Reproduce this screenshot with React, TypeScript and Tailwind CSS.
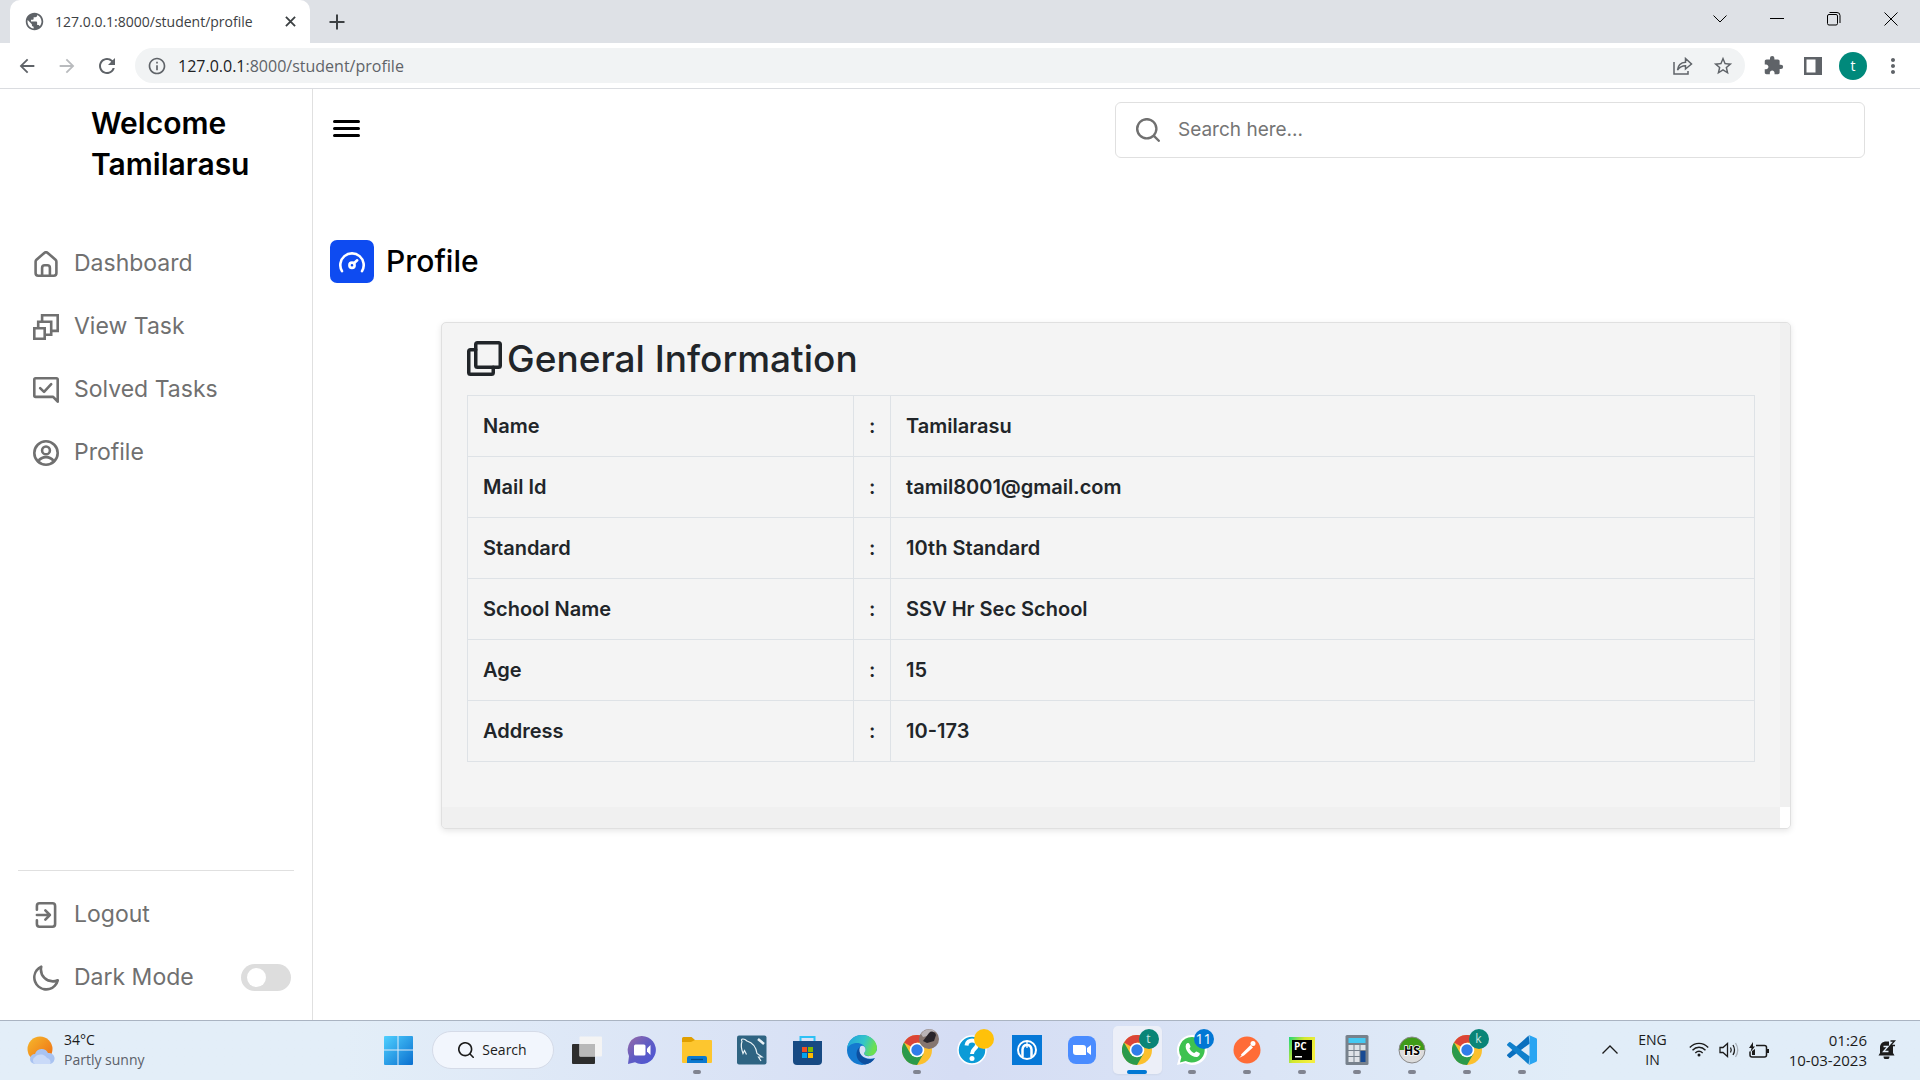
import React from "react";
import {
  MdArrowBack,
  MdArrowForward,
  MdExtension,
  MdInfoOutline,
  MdMoreVert,
  MdPublic,
  MdRefresh,
  MdStarBorder,
} from "react-icons/md";

type Kids = { children?: React.ReactNode };

/* ---------- line icons ---------- */

function Line({ children, className = "size-[26px]" }: Kids & { className?: string }) {
  return (
    <svg
      viewBox="2 2 20 20"
      className={`${className} shrink-0`}
      fill="none"
      stroke="currentColor"
      strokeWidth="2"
      strokeLinecap="round"
      strokeLinejoin="round"
      aria-hidden="true"
    >
      {children}
    </svg>
  );
}

const HomeIcon = () => (
  <Line>
    <path
      stroke="none"
      fill="currentColor"
      d="M20,8h0L14,2.74a3,3,0,0,0-4,0L4,8a3,3,0,0,0-1,2.26V19a3,3,0,0,0,3,3H18a3,3,0,0,0,3-3V10.25A3,3,0,0,0,20,8ZM14,20H10V15a1,1,0,0,1,1-1h2a1,1,0,0,1,1,1Zm5-1a1,1,0,0,1-1,1H16V15a3,3,0,0,0-3-3H11a3,3,0,0,0-3,3v5H6a1,1,0,0,1-1-1V10.25a1,1,0,0,1,.34-.75l6-5.25a1,1,0,0,1,1.32,0l6,5.25a1,1,0,0,1,.34.75Z"
    />
  </Line>
);
const LayersIcon = () => (
  <Line>
    <path strokeLinejoin="miter" d="M3 13H11V21H3Z M6 12.5V8H16V18H11.5 M9 7.5V3H21V15H16.5" />
  </Line>
);
const SolvedIcon = () => (
  <Line>
    <path d="M4 3H20a1 1 0 0 1 1 1V21L17.5 17.3H4a1 1 0 0 1-1-1V4a1 1 0 0 1 1-1Z" />
    <path d="M7.5 10.5l3 3 5.5-6" />
  </Line>
);
const UserIcon = () => (
  <Line>
    <circle cx="12" cy="12" r="9" />
    <circle cx="12" cy="10" r="3" />
    <path d="M6 18.3a7.3 7.3 0 0 1 12 0" />
  </Line>
);
const LogoutIcon = () => (
  <Line>
    <path d="M5 8V5a2 2 0 0 1 2-2h10a2 2 0 0 1 2 2v14a2 2 0 0 1-2 2H7a2 2 0 0 1-2-2v-3 M5 12H15 M11.5 8.5L15 12 11.5 15.5" />
  </Line>
);
const MoonIcon = () => (
  <Line>
    <path
      stroke="none"
      fill="currentColor"
      d="M21.64,13a1,1,0,0,0-1.05-.14,8.05,8.05,0,0,1-3.37.73A8.15,8.15,0,0,1,9.08,5.49a8.59,8.59,0,0,1,.25-2A1,1,0,0,0,8,2.36,10.14,10.14,0,1,0,22,14.05,1,1,0,0,0,21.64,13Zm-9.5,6.69A8.14,8.14,0,0,1,7.08,5.22v.27A10.15,10.15,0,0,0,17.22,15.63a9.79,9.79,0,0,0,2.1-.22A8.11,8.11,0,0,1,12.14,19.73Z"
    />
  </Line>
);
const SearchIcon = ({ className }: { className?: string }) => (
  <Line className={className}>
    <path
      stroke="none"
      fill="currentColor"
      d="M21.71,20.29,18,16.61A9,9,0,1,0,16.61,18l3.68,3.68a1,1,0,0,0,1.42,0A1,1,0,0,0,21.71,20.29ZM11,18a7,7,0,1,1,7-7A7,7,0,0,1,11,18Z"
    />
  </Line>
);
const GaugeIcon = () => (
  <Line>
    <path d="M4.3 19A9 9 0 1 1 19.7 19" />
    <circle cx="12" cy="14.5" r="2" />
    <path d="M13.5 13L16 10.7" />
  </Line>
);
const CopiesIcon = () => (
  <Line className="size-[35px]">
    <rect x="7" y="3" width="14" height="14" rx="1" />
    <path d="M7 7H4a1 1 0 0 0-1 1v12a1 1 0 0 0 1 1h12a1 1 0 0 0 1-1v-3" />
  </Line>
);

/* ---------- browser chrome ---------- */

function IconButton({ label, children, className = "w-10" }: Kids & { label: string; className?: string }) {
  return (
    <button type="button" aria-label={label} className={`flex h-full shrink-0 items-center justify-center ${className}`}>
      {children}
    </button>
  );
}

function TabStrip() {
  return (
    <div className="flex h-[43px] items-stretch bg-[#dee1e6] pl-[10px] text-[#3c4043]">
      <div className="flex w-[300px] items-center rounded-t-[10px] bg-white pr-[10px] pb-px pl-[14px]">
        <MdPublic className="size-[21px] shrink-0 text-[#5f6368]" />
        <span className="ml-[10px] flex-1 text-[14px] whitespace-nowrap">127.0.0.1:8000/student/profile</span>
        <IconButton label="Close tab" className="w-5">
          <svg viewBox="0 0 12 12" className="size-[11px]" stroke="currentColor" strokeWidth="2">
            <path d="M1 1L11 11M11 1L1 11" />
          </svg>
        </IconButton>
      </div>
      <IconButton label="New tab" className="w-[54px]">
        <svg viewBox="0 0 16 16" className="size-4" stroke="currentColor" strokeWidth="2">
          <path d="M8 0.5V15.5M0.5 8H15.5" />
        </svg>
      </IconButton>
      <div className="ml-auto flex h-[38px] text-black">
        <IconButton label="Search tabs" className="w-14">
          <svg viewBox="0 0 14 8" className="h-2 w-[14px]" fill="none" stroke="currentColor">
            <path d="M0.5 0.5L7 7L13.5 0.5" />
          </svg>
        </IconButton>
        <IconButton label="Minimise" className="w-[57px]">
          <svg viewBox="0 0 14 2" className="h-[2px] w-[14px]">
            <path d="M0 0.5H14" stroke="currentColor" />
          </svg>
        </IconButton>
        <IconButton label="Restore" className="w-[57px]">
          <svg viewBox="0 0 14 14" className="size-[14px]" fill="none" stroke="currentColor">
            <rect x="0.5" y="2.5" width="10" height="10.5" rx="1.5" />
            <path d="M2.5 0.5H10A3 3 0 0 1 13 3.5V11" />
          </svg>
        </IconButton>
        <IconButton label="Close" className="w-[58px]">
          <svg viewBox="0 0 14 14" className="size-[14px]" stroke="currentColor">
            <path d="M0.5 0.5L13.5 13.5M13.5 0.5L0.5 13.5" />
          </svg>
        </IconButton>
      </div>
    </div>
  );
}

function Toolbar() {
  return (
    <div className="flex h-[46px] items-center border-b border-[#dadce0] bg-white pr-[7px] pl-[7px] text-[#5f6368]">
      <IconButton label="Back">
        <MdArrowBack className="size-[22px]" />
      </IconButton>
      <IconButton label="Forward">
        <MdArrowForward className="size-[22px] text-[#b9bbbe]" />
      </IconButton>
      <IconButton label="Reload">
        <MdRefresh className="size-6" />
      </IconButton>
      <div className="ml-2 flex h-[35px] flex-1 items-center rounded-full bg-[#f1f3f4] pr-[2px] pl-3">
        <MdInfoOutline className="size-5 shrink-0" />
        <label htmlFor="address" className="ml-[11px] text-[16px] text-[#202124]">
          127.0.0.1
        </label>
        <input
          id="address"
          defaultValue=":8000/student/profile"
          className="min-w-0 flex-1 bg-transparent text-[16px] text-[#5f6368] outline-none"
        />
        <IconButton label="Share">
          <svg viewBox="0 0 20 18" className="h-[18px] w-5" fill="none" stroke="currentColor" strokeWidth="1.5">
            <path d="M1 5V17H15V14" />
            <path d="M4.5 13C5 8 8 5.5 12.5 5.2V1.5L18.5 7L12.5 12V8.7C9 8.7 6.5 10 4.5 13Z" />
          </svg>
        </IconButton>
        <IconButton label="Bookmark">
          <MdStarBorder className="size-[22px]" />
        </IconButton>
      </div>
      <div className="ml-2 flex h-full">
        <IconButton label="Extensions">
          <MdExtension className="size-[21px]" />
        </IconButton>
        <IconButton label="Side panel">
          <svg viewBox="0 0 18 18" className="size-[18px]">
            <path fill="currentColor" fillRule="evenodd" d="M0 0H18V18H0Z M2.5 2.5V15.5H11.5V2.5Z" />
          </svg>
        </IconButton>
        <IconButton label="Account">
          <span className="flex size-7 items-center justify-center rounded-full bg-[#00897b] text-[14px] text-white">t</span>
        </IconButton>
        <IconButton label="Menu">
          <MdMoreVert className="size-6" />
        </IconButton>
      </div>
    </div>
  );
}

/* ---------- page ---------- */

function NavLink({ icon, children }: Kids & { icon: React.ReactNode }) {
  return (
    <a href="#" className="flex h-[63px] items-center gap-[15px] pl-[15px] text-[23px]">
      {icon}
      {children}
    </a>
  );
}

function Sidebar() {
  return (
    <nav className="flex w-[313px] shrink-0 flex-col border-r border-[#e0e0e0] px-[18px] pt-[14px] pb-[11px] text-[#707070]">
      <h1 className="pl-[73px] text-[30px] leading-[41px] font-semibold text-black">
        Welcome
        <br />
        Tamilarasu
      </h1>
      <div className="mt-[47px] flex flex-1 flex-col">
        <NavLink icon={<HomeIcon />}>Dashboard</NavLink>
        <NavLink icon={<LayersIcon />}>View Task</NavLink>
        <NavLink icon={<SolvedIcon />}>Solved Tasks</NavLink>
        <NavLink icon={<UserIcon />}>Profile</NavLink>
      </div>
      <div className="border-t border-[#e0e0e0] pt-3">
        <NavLink icon={<LogoutIcon />}>Logout</NavLink>
        <div className="flex h-[63px] items-center gap-[15px] pr-[3px] pl-[15px] text-[23px]">
          <MoonIcon />
          <label htmlFor="dark">Dark Mode</label>
          <input
            id="dark"
            type="checkbox"
            role="switch"
            className="ml-auto h-[27px] w-[50px] appearance-none rounded-full bg-[#ddd] p-1 pl-[6px] before:block before:size-[19px] before:rounded-full before:bg-white checked:bg-[#0e4bf1]"
          />
        </div>
      </div>
    </nav>
  );
}

const rows = [
  ["Name", "Tamilarasu"],
  ["Mail Id", "tamil8001@gmail.com"],
  ["Standard", "10th Standard"],
  ["School Name", "SSV Hr Sec School"],
  ["Age", "15"],
  ["Address", "10-173"],
];

function InfoCard() {
  return (
    <section className="mt-[39px] mr-[129px] ml-[111px] grid grid-cols-[1fr_10px] overflow-hidden rounded-[5px] border border-[#e0e0e0] bg-[#f4f4f4] text-[#212529] shadow-[0_2px_6px_rgba(0,0,0,0.1)]">
      <div className="px-[25px] pt-3 pb-[45px]">
        <h3 className="flex h-[47px] items-center gap-[5px] text-[37px] font-medium">
          <CopiesIcon />
          General Information
        </h3>
        <table className="mt-[13px] w-full table-fixed border-collapse text-left text-[20px] leading-[30px]">
          <colgroup>
            <col className="w-[30%]" />
            <col className="w-[37px]" />
            <col />
          </colgroup>
          <tbody>
            {rows.map(([name, value]) => (
              <tr key={name}>
                <th scope="row" className="border border-[#dee2e6] px-[15px] py-[15px] font-semibold">
                  {name}
                </th>
                <td className="border border-[#dee2e6] text-center font-semibold">:</td>
                <td className="border border-[#dee2e6] px-[15px] font-semibold">{value}</td>
              </tr>
            ))}
          </tbody>
        </table>
      </div>
      <div className="bg-[#f0f0f0]" />
      <div className="h-[21px] bg-[#f0f0f0]" />
      <div className="bg-white" />
    </section>
  );
}

function Main() {
  return (
    <main className="flex-1 pl-[17px]">
      <header className="flex items-center justify-between pt-[13px] pr-[55px] pl-[3px]">
        <button type="button" aria-label="Toggle sidebar" className="mb-1">
          <svg viewBox="0 0 27 17" className="h-[17px] w-[27px]" stroke="#000" strokeWidth="3" strokeLinecap="round">
            <path d="M1.5 1.5H25.5M1.5 8.5H25.5M1.5 15.5H25.5" />
          </svg>
        </button>
        <label className="flex h-14 w-[750px] items-center gap-[18px] rounded-[6px] border border-[#e0e0e0] pl-5 text-[#707070]">
          <SearchIcon className="size-6" />
          <input
            type="text"
            aria-label="Search"
            placeholder="Search here..."
            className="min-w-0 flex-1 text-[19px] outline-none placeholder:text-[#757575]"
          />
        </label>
      </header>
      <div className="mt-[82px] flex items-center gap-3">
        <span className="flex h-[43px] w-11 items-center justify-center rounded-[7px] bg-[#0e4bf1] text-white">
          <GaugeIcon />
        </span>
        <h2 className="text-[30px] leading-[43px] font-medium text-black">Profile</h2>
      </div>
      <InfoCard />
    </main>
  );
}

/* ---------- taskbar icons ---------- */

function Art({ children, box = "0 0 30 30" }: Kids & { box?: string }) {
  return (
    <svg viewBox={box} className="size-[30px]" aria-hidden="true">
      {children}
    </svg>
  );
}

const WindowsArt = () => (
  <Art>
    <defs>
      <linearGradient id="win" x1="0" y1="0" x2="1" y2="1" gradientUnits="objectBoundingBox">
        <stop offset="0" stopColor="#4fd0ff" />
        <stop offset="1" stopColor="#0a6fcf" />
      </linearGradient>
    </defs>
    <path fill="url(#win)" d="M1 2a1 1 0 0 1 1-1H14.5V14.5H1Z M15.5 1H29a1 1 0 0 1 1 1V14.5H15.5Z M1 15.5H14.5V30H2a1 1 0 0 1-1-1Z M15.5 15.5H30V29a1 1 0 0 1-1 1H15.5Z" />
  </Art>
);
const TaskViewArt = () => (
  <Art>
    <rect x="0" y="9" width="23" height="20" rx="1" fill="#2d2d2d" />
    <rect x="7.5" y="1.5" width="22.5" height="20" rx="1" fill="#f4f4f4" />
    <rect x="7.5" y="9" width="15.5" height="12.5" fill="#b9b9b9" />
  </Art>
);
const ChatArt = () => (
  <Art>
    <defs>
      <linearGradient id="chat" x1="0" y1="0" x2="1" y2="1">
        <stop offset="0" stopColor="#9a6aa6" />
        <stop offset="0.5" stopColor="#5f5cc4" />
        <stop offset="1" stopColor="#4b55d6" />
      </linearGradient>
    </defs>
    <path fill="url(#chat)" d="M15 1A14 14 0 1 1 8 27.2L1 29 2 21A14 14 0 0 1 15 1Z" />
    <rect x="7" y="9.5" width="11.5" height="11" rx="1.5" fill="#fff" />
    <path fill="#fff" d="M20 13.5L23.5 10V20L20 16.5Z" />
  </Art>
);
const ExplorerArt = () => (
  <Art>
    <path fill="#e09f00" d="M0 3.5a1.5 1.5 0 0 1 1.5-1.5H9.5L13 5H29V12H0Z" />
    <path fill="#fdc62f" d="M0 7H9L13 5H29a1 1 0 0 1 1 1V27a1 1 0 0 1-1 1H1a1 1 0 0 1-1-1Z" />
    <path fill="#0b79d0" d="M5 28V23a2 2 0 0 1 2-2H23a2 2 0 0 1 2 2V28Z" />
    <path stroke="#054b86" strokeWidth="1.3" d="M9 24.5H21" />
  </Art>
);
const MysqlArt = () => (
  <Art>
    <rect x="0" y="0.5" width="29.5" height="29" rx="2" fill="#2f6482" />
    <path fill="none" stroke="#e8f1f5" strokeWidth="1.2" d="M9.5 19.5L7.5 15.5 6 18.5C4 13 4 9 5 6.5 3 3.5 7 3 10 6 15 7.5 19 11.5 20 18.5L25 22 21.5 22 24 26" />
    <path stroke="#e8f1f5" strokeWidth="2.5" d="M21 4L27 9" />
  </Art>
);
const StoreArt = () => (
  <Art>
    <path fill="none" stroke="#2ec1f5" strokeWidth="2" d="M8.5 7V2H22.5V7" />
    <path fill="#174a83" d="M1 6H30V26a4 4 0 0 1-4 4H5a4 4 0 0 1-4-4Z" />
    <path fill="#f25022" d="M10 12h5v5h-5z" />
    <path fill="#7fba00" d="M16 12h5v5h-5z" />
    <path fill="#00a4ef" d="M10 18h5v5h-5z" />
    <path fill="#ffb900" d="M16 18h5v5h-5z" />
  </Art>
);
const EdgeArt = () => (
  <Art>
    <defs>
      <linearGradient id="edge" x1="0" y1="0" x2="1" y2="0.3">
        <stop offset="0" stopColor="#1f9fe0" />
        <stop offset="0.6" stopColor="#33c5c9" />
        <stop offset="1" stopColor="#6be04f" />
      </linearGradient>
    </defs>
    <circle cx="15" cy="15" r="15" fill="#1479cf" />
    <path fill="url(#edge)" d="M0 14C1 5 7 0 15 0 24 0 30 6.5 30 13 30 18 27 21 22.5 21 19 21 17 19.5 17 18.5 17 17.5 18.5 17 18.5 14.5 18.5 10 13 7.5 9 8 4.5 8.5 1 11 0 14Z" />
    <path fill="#0d4f9f" d="M13 12C8 15 7.5 26 18 29.5 22 29 26 26.5 28 23 19 27 11.5 21 13 12Z" />
    <path fill="#d6e0f6" d="M13 12C15 9.5 18.5 11.5 18.5 14.5 18.5 17 17 17.5 17 18.5 17 20.5 20 21.5 23 21 26 21 29 18 30 15V24L28 23C19 26 10 20 13 12Z" />
  </Art>
);
const ChromeArt = () => (
  <Art>
    <circle cx="15" cy="15" r="15" fill="#fbc02d" />
    <path fill="#db4437" d="M15 15L2 7.5A15 15 0 0 1 28 7.5H15Z" />
    <path fill="#2b9a4b" d="M15 15L8.5 18.7 2 7.5A15 15 0 0 0 15 30L21.5 18.7Z" />
    <circle cx="15" cy="15" r="7.3" fill="#fff" />
    <circle cx="15" cy="15" r="5.7" fill="#2f7de9" />
  </Art>
);
const HelpArt = () => (
  <Art>
    <circle cx="15" cy="15" r="14" fill="#0b9bd7" stroke="#fff" strokeWidth="1.5" />
    <path fill="none" stroke="#fff" strokeWidth="4" d="M9.5 10.5C10 3.5 20.5 4 20 10 19.5 14 15 14 15 19" />
    <circle cx="15" cy="23.5" r="2.5" fill="#fff" />
  </Art>
);
const BlueArt = () => (
  <Art>
    <path fill="#0678d7" d="M0 0H30V30H0Z" />
    <circle cx="15" cy="15" r="9" fill="none" stroke="#fff" strokeWidth="2" />
    <path fill="none" stroke="#fff" strokeWidth="2.5" d="M10.5 22V14.5C11 8.5 19 8.500 19.5 14.5V22" />
    <path stroke="#fff" strokeWidth="1.3" d="M15 7V13" />
  </Art>
);
const ZoomArt = () => (
  <Art>
    <rect x="1" y="1" width="28" height="28" rx="8" fill="#4a8cff" />
    <path fill="#fff" d="M6 10H16a3 3 0 0 1 3 3V20H9a3 3 0 0 1-3-3Z M20 13L24 10V20L20 17Z" />
  </Art>
);
const WhatsappArt = () => (
  <Art>
    <path fill="#fff" d="M15 0A15 15 0 1 1 8 28L0 30 2 22.5A15 15 0 0 1 15 0Z" />
    <path fill="#3ec250" d="M15.2 2A12.8 12.8 0 1 1 8.7 26L3 27.5 4.4 22A12.8 12.8 0 0 1 15.2 2Z" />
    <path fill="#fff" d="M9 9.5C10 7.5 12 7.5 12.5 9L13.5 11.5C13.5 12.5 12.5 13 12.5 13.5 13.5 15.5 15 17 17 18 18 18 18.5 16.5 19.5 16.5L22.5 18C23.5 19 22 21.5 20 22 14 22.5 7 15 9 9.5Z" />
  </Art>
);
const PostmanArt = () => (
  <Art>
    <circle cx="15" cy="15" r="13.5" fill="#ff6c37" />
    <circle cx="21" cy="8.5" r="2.5" fill="#fff" />
    <path fill="#fff" d="M18.5 10L21 12.5 12 20.5 7 23 9.5 20.5 9 19.5Z" />
  </Art>
);
const PycharmArt = () => (
  <Art>
    <defs>
      <linearGradient id="py" x1="0" y1="0" x2="1" y2="0.5">
        <stop offset="0" stopColor="#1fd67a" />
        <stop offset="0.5" stopColor="#d5e82f" />
        <stop offset="1" stopColor="#f3ee3f" />
      </linearGradient>
    </defs>
    <path fill="url(#py)" d="M2 2H28V28H2Z" />
    <path fill="#000" d="M5 5H25V25H5Z" />
    <text x="7" y="15" fill="#fff" fontSize="10" fontWeight="700">PC</text>
    <path fill="#fff" d="M8 21H15V22.5H8Z" />
  </Art>
);
const CalcArt = () => (
  <Art>
    <rect x="3.5" y="0" width="23" height="30" rx="1.5" fill="#77818c" />
    <rect x="6.5" y="3" width="17" height="5" fill="#45c9f2" />
    <path fill="#dfe3e8" d="M6.5 10h5v5h-5z M12.5 10h5v5h-5z M18.5 10h5v5h-5z M6.5 16h5v5h-5z M12.5 16h5v5h-5z M6.5 22h5v5h-5z M12.5 22h5v5h-5z" />
    <path fill="#174a93" d="M18.5 16h5v11h-5z" />
  </Art>
);
const HsArt = () => (
  <Art>
    <circle cx="15" cy="15" r="13" fill="#dcdcdc" />
    <path fill="#3f9b18" d="M2 15A13 13 0 0 1 28 15Z" />
    <circle cx="15" cy="15" r="13" fill="none" stroke="#8a8a8a" />
    <text x="15" y="19.5" textAnchor="middle" fill="#000" stroke="#fff" strokeWidth="1.5" paintOrder="stroke" fontSize="12" fontWeight="700">HS</text>
  </Art>
);
const VscodeArt = () => (
  <Art box="0 0 100 100">
    <path fill="#0a6fbe" d="M2 64L72 2 76 28 12 76a4 4 0 0 1-5 0L2 71a4.500 4.500 0 0 1 0-7Z" />
    <path fill="#1080cc" d="M2 36L72 98 76 72 12 24a4 4 0 0 0-5 0L2 29a4.500 4.500 0 0 0 0 7Z" />
    <path fill="#2aa5f2" d="M71 1a6 6 0 0 1 4 0L96 10a6 6 0 0 1 4 6V84a6 6 0 0 1-4 6L75 99a6 6 0 0 1-4 0C74 99 75 97 75 94V6C75 3 74 1 71 1Z" />
  </Art>
);

const apps: { name: string; art: React.ReactNode; badge?: React.ReactNode; open?: boolean; active?: boolean }[] = [
  { name: "Task view", art: <TaskViewArt /> },
  { name: "Chat", art: <ChatArt /> },
  { name: "File Explorer", art: <ExplorerArt />, open: true },
  { name: "MySQL Workbench", art: <MysqlArt /> },
  { name: "Store", art: <StoreArt /> },
  { name: "Edge", art: <EdgeArt /> },
  {
    name: "Chrome, photo account",
    art: <ChromeArt />,
    open: true,
    badge: (
      <svg viewBox="0 0 20 20" className="size-5">
        <circle cx="10" cy="10" r="10" fill="#85756f" />
        <path fill="#b9b3b6" d="M2 5A10 10 0 0 1 16 2L12 6 4 8Z" />
        <path fill="#29242a" d="M10 4a4 4 0 0 1 7 2L15 12 8 14 4 12Z" />
      </svg>
    ),
  },
  { name: "Help", art: <HelpArt />, badge: <span className="block size-5 rounded-full bg-[#ffc10a]" /> },
  { name: "Reader", art: <BlueArt /> },
  { name: "Zoom", art: <ZoomArt /> },
  { name: "Chrome, account t", art: <ChromeArt />, badge: <Initial>t</Initial>, open: true, active: true },
  {
    name: "WhatsApp",
    art: <WhatsappArt />,
    open: true,
    badge: <span className="flex size-5 items-center justify-center rounded-full bg-[#0277d4] text-[14px] text-white">11</span>,
  },
  { name: "Postman", art: <PostmanArt />, open: true },
  { name: "PyCharm", art: <PycharmArt />, open: true },
  { name: "Calculator", art: <CalcArt />, open: true },
  { name: "HeidiSQL", art: <HsArt />, open: true },
  { name: "Chrome, account k", art: <ChromeArt />, badge: <Initial>k</Initial>, open: true },
  { name: "Visual Studio Code", art: <VscodeArt />, open: true },
];

function Initial({ children }: Kids) {
  return (
    <span className="flex size-5 items-center justify-center rounded-full bg-[#0a8577] text-[12px] text-[#c5e5e0]">{children}</span>
  );
}

function Taskbar() {
  return (
    <footer className="grid h-[60px] grid-cols-[1fr_auto_1fr] items-center border-t border-[#aab4c2] bg-linear-to-r from-[#e3eef8] from-18% via-[#d5ddf4] via-50% to-[#e1edf8] to-82% pb-[2px] text-[14px] text-[#1b1b1b]">
      <button type="button" className="flex items-center gap-[9px] pl-[27px] text-left leading-5">
        <svg viewBox="0 0 28 28" className="size-7" aria-hidden="true">
          <defs>
            <linearGradient id="sun" x1="0" y1="0" x2="1" y2="1">
              <stop offset="0" stopColor="#f6b92c" />
              <stop offset="1" stopColor="#ee6a12" />
            </linearGradient>
          </defs>
          <circle cx="13" cy="13" r="12.5" fill="url(#sun)" />
          <path fill="#a9c3f1" d="M8 28a5 5 0 0 1 0-10 7 7 0 0 1 13-1 5.5 5.5 0 0 1 2 11Z" />
          <path fill="#c9daf8" d="M8 28a4 4 0 0 1 0-7 7 6 0 0 1 12 1 4 4 0 0 1 3 6Z" />
        </svg>
        <span>
          <span className="block">34°C</span>
          <span className="block text-[#5b6068]">Partly sunny</span>
        </span>
      </button>
      <div className="flex h-full items-center">
        <button type="button" aria-label="Start" className="flex w-[55px] justify-center">
          <WindowsArt />
        </button>
        <button
          type="button"
          className="mx-[6px] flex h-[38px] w-[122px] items-center justify-center gap-2 rounded-full border border-[#d5dbe8] bg-[#f2f6fd]"
        >
          <SearchIcon className="size-4" />
          Search
        </button>
        {apps.map((app) => (
          <button
            key={app.name}
            type="button"
            aria-label={app.name}
            className={`relative mx-[3px] flex h-12 w-[49px] items-center justify-center rounded-[5px] ${app.active ? "bg-[#eceff8] shadow-xs" : ""}`}
          >
            {app.art}
            {app.badge && <span className="absolute top-[3px] right-[3px]">{app.badge}</span>}
            {app.open && (
              <span
                className={`absolute bottom-0 left-1/2 h-1 -translate-x-1/2 rounded-full ${app.active ? "w-5 bg-[#0078d4]" : "w-2 bg-[#808490]"}`}
              />
            )}
          </button>
        ))}
      </div>
      <div className="flex items-center justify-end pr-6 leading-5">
        <button type="button" aria-label="Hidden icons" className="mr-5">
          <svg viewBox="0 0 16 9" className="h-[9px] w-4" fill="none" stroke="currentColor" strokeWidth="1.3">
            <path d="M0.5 8.5L8 1L15.5 8.5" />
          </svg>
        </button>
        <button type="button" className="mr-[22px] text-center">
          ENG
          <br />
          IN
        </button>
        <button type="button" aria-label="Network, volume and battery" className="mr-5 flex items-center gap-[10px]">
          <svg viewBox="0 0 20 15" className="h-[15px] w-5" fill="none" stroke="currentColor" strokeWidth="1.4">
            <path d="M0.8 5.5C6 0 14 0 19.2 5.5 M3.5 8.2C7.3 4.3 12.7 4.3 16.5 8.2 M6.3 11C8.5 9 11.5 9 13.7 11" />
            <circle cx="10" cy="13" r="1.5" fill="currentColor" stroke="none" />
          </svg>
          <svg viewBox="0 0 20 16" className="h-4 w-5" fill="none" stroke="currentColor" strokeWidth="1.3">
            <path d="M1 5.5H4L8.5 1.5V14.5L4 10.5H1Z M11.5 5.5Q13 8 11.5 10.5 M14 3Q17 8 14 13" />
            <path d="M16.5 1Q21 8 16.5 15" stroke="#a9b0b8" />
          </svg>
          <svg viewBox="0 0 20 16" className="h-4 w-5" fill="none" stroke="currentColor" strokeWidth="1.5">
            <path d="M7 3.5H15.5a2 2 0 0 1 2 2V13a2 2 0 0 1-2 2H3a2 2 0 0 1-2-2V9.5" />
            <path fill="currentColor" stroke="none" d="M4 0L0 6H2.5L1.5 10 6 4.5H4Z M3 13V9L6 7V13Z M18 7H20V11H18Z" />
          </svg>
        </button>
        <button type="button" className="text-right text-[15px]">
          01:26
          <br />
          10-03-2023
        </button>
        <button type="button" aria-label="Notifications" className="ml-[11px]">
          <svg viewBox="0 0 18 19" className="h-[19px] w-[18px]">
            <path fill="currentColor" d="M2 13V7.5C2 3.5 5 1.5 8 1.5H11V6H15V13L16.5 15.5H0.5Z M5.5 16.5H11.5A3 3 0 0 1 5.5 16.5Z" />
            <path fill="none" stroke="#e1edf8" strokeWidth="1.3" d="M5.5 6.5H10L5.5 11.5H10.5" />
            <path fill="none" stroke="currentColor" strokeWidth="1.4" d="M12.5 1H16.5L12.5 5.5H17" />
          </svg>
        </button>
      </div>
    </footer>
  );
}

export default function App() {
  return (
    <div className="flex min-h-screen flex-col bg-white font-['Open_Sans',sans-serif]">
      <TabStrip />
      <Toolbar />
      <div className="flex flex-1 font-[Inter,sans-serif]">
        <Sidebar />
        <Main />
      </div>
      <Taskbar />
    </div>
  );
}
